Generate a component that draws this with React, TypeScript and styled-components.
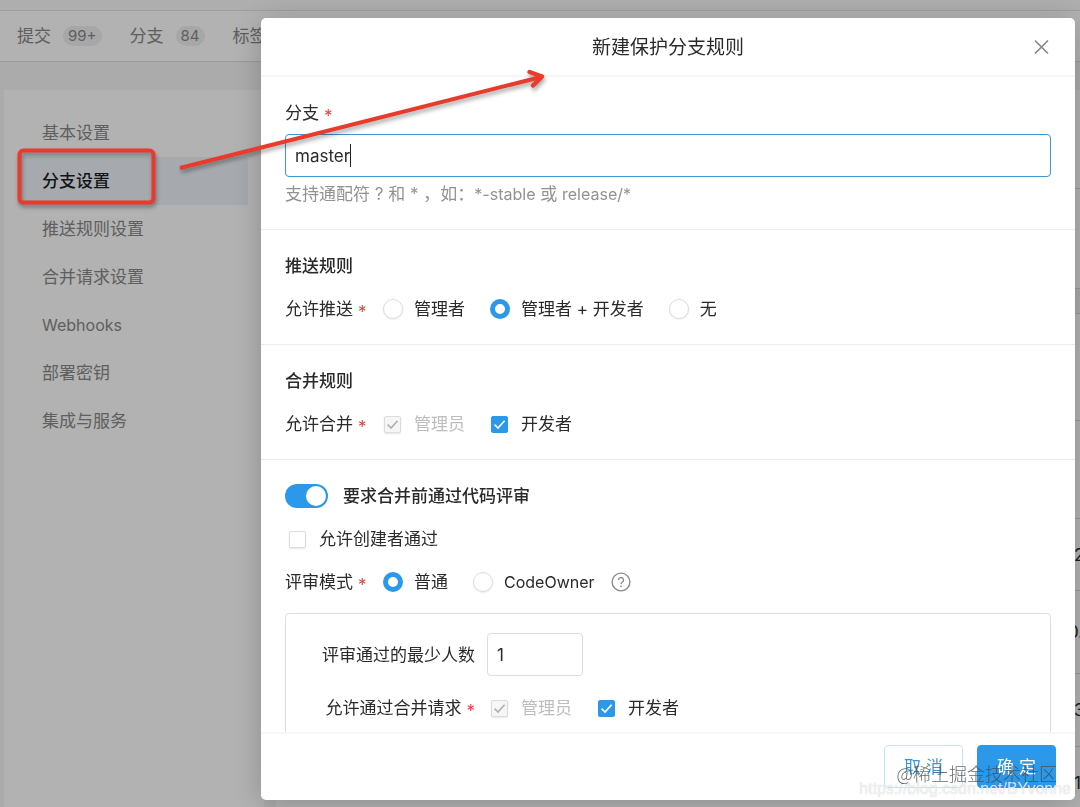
import React, { useState } from "react";
import styled, { createGlobalStyle, css } from "styled-components";

const BLUE = "#2b98ea";

const GlobalStyle = createGlobalStyle`
  *, *::before, *::after { box-sizing: border-box; }
  html, body, #root { height: 100%; }
  body {
    margin: 0;
    overflow: hidden;
    background: #f5f5f5;
    color: #2a2a2a;
    font-family: Inter, "Noto Sans CJK SC", sans-serif;
    font-size: 17px;
    line-height: 24px;
  }
  button, input { font: inherit; color: inherit; margin: 0; }
`;

/* ---------- page behind the dialog ---------- */

const Page = styled.div`
  display: flex;
  flex-direction: column;
  height: 100vh;
  overflow: hidden;
`;

const TopStrip = styled.div`
  flex: none;
  height: 11px;
  background: #f9f9f9;
  border-bottom: 1px solid #e2e2e2;
`;

const TabBar = styled.nav`
  flex: none;
  display: flex;
  align-items: center;
  gap: 28px;
  height: 51px;
  padding-left: 17px;
  background: #fff;
  border-bottom: 1px solid #dcdcdc;
`;

const Tab = styled.a`
  display: flex;
  align-items: center;
  gap: 12px;
  color: #888;
  text-decoration: none;
  white-space: nowrap;
`;

const Count = styled.span`
  padding: 0 5px;
  border-radius: 10px;
  background: #efefef;
  font-size: 15px;
  line-height: 20px;
`;

const Columns = styled.div`
  flex: 1;
  display: flex;
  gap: 12px;
  min-height: 0;
  padding: 28px 0 0 4px;
`;

const Sidebar = styled.nav`
  flex: none;
  width: 260px;
  padding: 19px 16px 0 14px;
  background: #fff;
`;

const SideLink = styled.a<{ $active?: boolean }>`
  display: block;
  padding: 12px 24px;
  color: ${(p) => (p.$active ? "#1c1f22" : "#888")};
  font-weight: ${(p) => (p.$active ? 500 : 400)};
  background: ${(p) => (p.$active ? "#eef4fa" : "transparent")};
  text-decoration: none;
`;

const Listing = styled.div`
  flex: 1;
  display: flex;
  flex-direction: column;
  background: #fff;
`;

const ListRow = styled.div<{ $height: number; $shaded?: boolean }>`
  flex: none;
  display: flex;
  align-items: center;
  justify-content: flex-end;
  height: ${(p) => p.$height}px;
  background: ${(p) => (p.$shaded ? "#f2f2f2" : "transparent")};
  border-bottom: 1px solid #dedede;
`;

const ListValue = styled.span<{ $wide?: boolean }>`
  width: ${(p) => (p.$wide ? 12 : 6)}px;
  white-space: nowrap;
`;

/* ---------- dialog ---------- */

const Overlay = styled.div`
  position: fixed;
  inset: 0;
  display: flex;
  padding: 18px 5px 7px 261px;
  background: rgba(0, 0, 0, 0.3);
`;

const Dialog = styled.section`
  position: relative;
  flex: 1;
  display: flex;
  flex-direction: column;
  min-width: 0;
  border-radius: 5px;
  background: #fff;
  box-shadow: 0 4px 32px rgba(0, 0, 0, 0.22);
`;

const DialogHeader = styled.header`
  flex: none;
  display: flex;
  align-items: center;
  height: 59px;
  padding: 2px 24px 0;
  border-bottom: 2px solid #f6f6f6;
`;

const DialogTitle = styled.h2`
  flex: 1;
  margin: 0;
  padding-left: 20px;
  font-size: 19px;
  font-weight: 400;
  text-align: center;
`;

const CloseButton = styled.button`
  display: flex;
  padding: 0;
  border: 0;
  background: none;
  color: #858585;
`;

const DialogBody = styled.form`
  flex: 1;
  min-height: 0;
  overflow-y: auto;
  scrollbar-width: none;
`;

const Section = styled.section`
  display: flex;
  flex-direction: column;
  gap: 19px;
  padding: 24px 24px 23px;
  & + & { border-top: 1px solid #ececec; }
`;

const BranchField = styled.div`
  display: flex;
  flex-direction: column;
`;

const boxed = css`
  height: 43px;
  padding: 0 9px;
  border: 1px solid #dcdcdc;
  border-radius: 4px;
  background: #fff;
  outline: none;
`;

const BranchBox = styled.div`
  position: relative;
  display: flex;
  margin: 9px 0 5px;
`;

const BranchInput = styled.input`
  ${boxed}
  flex: 1;
  min-width: 0;
  border-color: #3f97d3;
  caret-color: transparent;
`;

const Caret = styled.span`
  position: absolute;
  top: 10px;
  left: 65px;
  width: 1px;
  height: 23px;
  background: #222;
`;

const CountInput = styled.input`
  ${boxed}
  width: 96px;
`;

const Hint = styled.small`
  color: #929292;
  font-size: 17px;
`;

const Latin = styled.span`
  font-size: 16px;
`;

const SectionTitle = styled.h3`
  margin: 0;
  font-size: 17px;
  font-weight: 500;
`;

const Star = styled.span`
  margin-left: 5px;
  color: #e0403c;
  line-height: 16px;
  vertical-align: -3px;
`;

const FieldRow = styled.div`
  display: flex;
  align-items: center;
`;

const FieldName = styled.span`
  width: 98px;
`;

const Options = styled.div`
  display: flex;
  align-items: center;
  gap: 25px;
`;

const Choice = styled.label<{ $disabled?: boolean }>`
  display: flex;
  align-items: center;
  gap: 11px;
  white-space: nowrap;
  color: ${(p) => (p.$disabled ? "#bdbdbd" : "inherit")};
`;

const RadioInput = styled.input`
  appearance: none;
  width: 20px;
  height: 20px;
  border: 1px solid #dcdcdc;
  border-radius: 50%;
  background: #fff;
  box-shadow: 0 1px 2px rgba(0, 0, 0, 0.08);
  &:checked {
    border: 5px solid ${BLUE};
    box-shadow: none;
  }
`;

const TickSlot = styled.span`
  display: grid;
  place-items: center;
  width: 19px;
  height: 19px;
  margin-right: 1px;
  & > * { grid-area: 1 / 1; }
  & > svg { pointer-events: none; }
`;

const TickInput = styled.input`
  appearance: none;
  width: 17px;
  height: 17px;
  border: 1px solid #dcdcdc;
  border-radius: 2px;
  background: #fff;
  box-shadow: 0 1px 2px rgba(0, 0, 0, 0.1);
  &:checked {
    border-color: ${BLUE};
    background: ${BLUE};
    box-shadow: none;
  }
  &:disabled {
    border-color: #dcdcdc;
    background: #f6f6f6;
    box-shadow: 0 1px 2px rgba(0, 0, 0, 0.1);
  }
`;

const SwitchRow = styled.label`
  display: flex;
  align-items: center;
  gap: 15px;
  font-weight: 500;
`;

const Switch = styled.input`
  appearance: none;
  display: flex;
  align-items: center;
  justify-content: flex-start;
  width: 43px;
  height: 24px;
  padding: 0 2px;
  border-radius: 12px;
  background: #ccc;
  &::before {
    content: "";
    width: 20px;
    height: 20px;
    border-radius: 50%;
    background: #fff;
  }
  &:checked {
    justify-content: flex-end;
    background: ${BLUE};
  }
`;

const Inset = styled.div`
  padding-left: 3px;
`;

const HelpButton = styled.button`
  display: flex;
  margin-left: 16px;
  padding: 0;
  border: 0;
  background: none;
  color: #8c8c8c;
`;

const ReviewPanel = styled.div`
  display: grid;
  grid-template-columns: 153px 1fr;
  align-items: center;
  gap: 20px 12px;
  padding: 19px 36px 36px;
  border: 1px solid #dedede;
  border-radius: 4px;
`;

const PanelLabel = styled.label`
  text-align: right;
  white-space: nowrap;
`;

const DialogFooter = styled.footer`
  flex: none;
  display: flex;
  justify-content: flex-end;
  gap: 14px;
  padding: 11px 19px 12px;
  border-top: 2px solid #f7f7f7;
`;

const ActionButton = styled.button<{ $primary?: boolean }>`
  width: 79px;
  height: 43px;
  padding: 0;
  border: 1px solid ${(p) => (p.$primary ? BLUE : "#c4e3f8")};
  border-radius: 4px;
  background: ${(p) => (p.$primary ? BLUE : "#fff")};
  color: ${(p) => (p.$primary ? "#fff" : "#3996da")};
`;

/* ---------- marks on top of everything ---------- */

const Annotations = styled.svg`
  position: fixed;
  top: 0;
  left: 0;
  pointer-events: none;
  filter: drop-shadow(1px 3px 2px rgba(0, 0, 0, 0.35));
`;

const Watermark = styled.div`
  position: fixed;
  right: 23px;
  bottom: 22px;
  color: rgba(70, 70, 70, 0.8);
  font-family: "Noto Sans CJK SC", sans-serif;
  font-size: 18px;
  font-weight: 300;
  pointer-events: none;
`;

const WatermarkUrl = styled(Watermark)`
  right: 9px;
  bottom: 6px;
  color: rgba(255, 255, 255, 0.75);
  font-family: "Liberation Sans", sans-serif;
  font-size: 16px;
  text-shadow: 0 0 1px rgba(130, 130, 130, 0.5);
`;

function Required() {
  return <Star aria-hidden="true">*</Star>;
}

function Radio(props: {
  name: string;
  label: React.ReactNode;
  checked: boolean;
  onPick: () => void;
}) {
  return (
    <Choice>
      <RadioInput type="radio" name={props.name} checked={props.checked} onChange={props.onPick} />
      {props.label}
    </Choice>
  );
}

function Tick(props: { label: string; defaultChecked?: boolean; disabled?: boolean }) {
  const [on, setOn] = useState(!!props.defaultChecked);
  return (
    <Choice $disabled={props.disabled}>
      <TickSlot>
        <TickInput
          type="checkbox"
          checked={on}
          disabled={props.disabled}
          onChange={(e) => setOn(e.target.checked)}
        />
        {on && (
          <svg width="17" height="17" viewBox="0 0 17 17" fill="none" aria-hidden="true">
            <path
              d="M3.6 8.6 7 12 13.6 4.8"
              stroke={props.disabled ? "#b0b0b0" : "#fff"}
              strokeWidth="1.7"
            />
          </svg>
        )}
      </TickSlot>
      {props.label}
    </Choice>
  );
}

const sideItems: { id: string; label: React.ReactNode; active?: boolean }[] = [
  { id: "basic", label: "基本设置" },
  { id: "branch", label: "分支设置", active: true },
  { id: "push", label: "推送规则设置" },
  { id: "merge", label: "合并请求设置" },
  { id: "webhooks", label: <Latin>Webhooks</Latin> },
  { id: "keys", label: "部署密钥" },
  { id: "services", label: "集成与服务" },
];

const listRows: { height: number; text?: string; wide?: boolean; shaded?: boolean }[] = [
  { height: 99 },
  { height: 100 },
  { height: 25, shaded: true },
  { height: 107 },
  { height: 98 },
  { height: 72, text: "2" },
  { height: 83, text: "0.", wide: true },
  { height: 73, text: "3" },
  { height: 73, text: "1" },
];

const pushOptions = ["管理者", "管理者 + 开发者", "无"];

export default function App() {
  const [branch, setBranch] = useState("master");
  const [editing, setEditing] = useState(false);
  const [push, setPush] = useState(pushOptions[1]);
  const [mode, setMode] = useState("normal");
  const [minimum, setMinimum] = useState("1");

  return (
    <>
      <GlobalStyle />
      <Page>
        <TopStrip />
        <TabBar>
          <Tab href="#commits">提交 <Count>99+</Count></Tab>
          <Tab href="#branches">分支 <Count>84</Count></Tab>
          <Tab href="#tags">标签</Tab>
        </TabBar>
        <Columns>
          <Sidebar>
            {sideItems.map((item) => (
              <SideLink key={item.id} href={`#${item.id}`} $active={item.active}>
                {item.label}
              </SideLink>
            ))}
          </Sidebar>
          <Listing>
            {listRows.map((row, i) => (
              <ListRow key={i} $height={row.height} $shaded={row.shaded}>
                {row.text && <ListValue $wide={row.wide}>{row.text}</ListValue>}
              </ListRow>
            ))}
          </Listing>
        </Columns>
      </Page>

      <Overlay>
        <Dialog role="dialog" aria-labelledby="dialog-title">
          <DialogHeader>
            <DialogTitle id="dialog-title">新建保护分支规则</DialogTitle>
            <CloseButton type="button" aria-label="关闭">
              <svg width="20" height="20" viewBox="0 0 20 20" fill="none" aria-hidden="true">
                <path d="M4 2.5 17 15.5M17 2.5 4 15.5" stroke="currentColor" strokeWidth="1.6" />
              </svg>
            </CloseButton>
          </DialogHeader>

          <DialogBody id="rule-form">
            <Section>
              <BranchField>
                <label htmlFor="branch">分支<Required /></label>
                <BranchBox>
                  <BranchInput
                    id="branch"
                    type="text"
                    value={branch}
                    style={editing ? { caretColor: "#222" } : undefined}
                    onChange={(e) => {
                      setEditing(true);
                      setBranch(e.target.value);
                    }}
                  />
                  {!editing && <Caret />}
                </BranchBox>
                <Hint>
                  支持通配符 ? 和 * ，如：<Latin>*-stable</Latin> 或 <Latin>release/*</Latin>
                </Hint>
              </BranchField>
            </Section>

            <Section>
              <SectionTitle>推送规则</SectionTitle>
              <FieldRow>
                <FieldName>允许推送<Required /></FieldName>
                <Options>
                  {pushOptions.map((o) => (
                    <Radio key={o} name="push" label={o} checked={push === o} onPick={() => setPush(o)} />
                  ))}
                </Options>
              </FieldRow>
            </Section>

            <Section>
              <SectionTitle>合并规则</SectionTitle>
              <FieldRow>
                <FieldName>允许合并<Required /></FieldName>
                <Options>
                  <Tick label="管理员" defaultChecked disabled />
                  <Tick label="开发者" defaultChecked />
                </Options>
              </FieldRow>
            </Section>

            <Section>
              <SwitchRow>
                <Switch type="checkbox" role="switch" defaultChecked />
                要求合并前通过代码评审
              </SwitchRow>
              <Inset>
                <Tick label="允许创建者通过" />
              </Inset>
              <FieldRow>
                <FieldName>评审模式<Required /></FieldName>
                <Options>
                  <Radio
                    name="mode"
                    label="普通"
                    checked={mode === "normal"}
                    onPick={() => setMode("normal")}
                  />
                  <Radio
                    name="mode"
                    label={<Latin>CodeOwner</Latin>}
                    checked={mode === "owner"}
                    onPick={() => setMode("owner")}
                  />
                </Options>
                <HelpButton type="button" aria-label="帮助">
                  <svg width="20" height="20" viewBox="0 0 20 20" fill="none" stroke="currentColor" aria-hidden="true">
                    <circle cx="10" cy="10" r="8.9" strokeWidth="1.4" />
                    <path d="M7.5 8.1a2.5 2.5 0 1 1 3.7 2.1c-.8.5-1.2.9-1.2 1.9" strokeWidth="1.3" />
                    <circle cx="10" cy="14.3" r=".9" fill="currentColor" stroke="none" />
                  </svg>
                </HelpButton>
              </FieldRow>
              <ReviewPanel>
                <PanelLabel htmlFor="minimum">评审通过的最少人数</PanelLabel>
                <CountInput
                  id="minimum"
                  type="text"
                  inputMode="numeric"
                  value={minimum}
                  onChange={(e) => setMinimum(e.target.value)}
                />
                <PanelLabel as="span">允许通过合并请求<Required /></PanelLabel>
                <Inset>
                  <Options>
                    <Tick label="管理员" defaultChecked disabled />
                    <Tick label="开发者" defaultChecked />
                  </Options>
                </Inset>
              </ReviewPanel>
            </Section>
          </DialogBody>

          <DialogFooter>
            <ActionButton type="button">取 消</ActionButton>
            <ActionButton type="submit" form="rule-form" $primary>确 定</ActionButton>
          </DialogFooter>
        </Dialog>
      </Overlay>

      <Annotations width="560" height="220" viewBox="0 0 560 220" fill="none" stroke="#ea3a2c" aria-hidden="true">
        <rect x="19.5" y="150.5" width="134" height="52" rx="4" strokeWidth="4" />
        <path d="M180 168 541 77" strokeWidth="4" />
        <path d="M529.5 72 542 76.5 533 85.5" strokeWidth="4.5" strokeLinecap="round" strokeLinejoin="round" />
      </Annotations>
      <WatermarkUrl>https://blog.csdn.net/BYvonne</WatermarkUrl>
      <Watermark>@稀土掘金技术社区</Watermark>
    </>
  );
}
